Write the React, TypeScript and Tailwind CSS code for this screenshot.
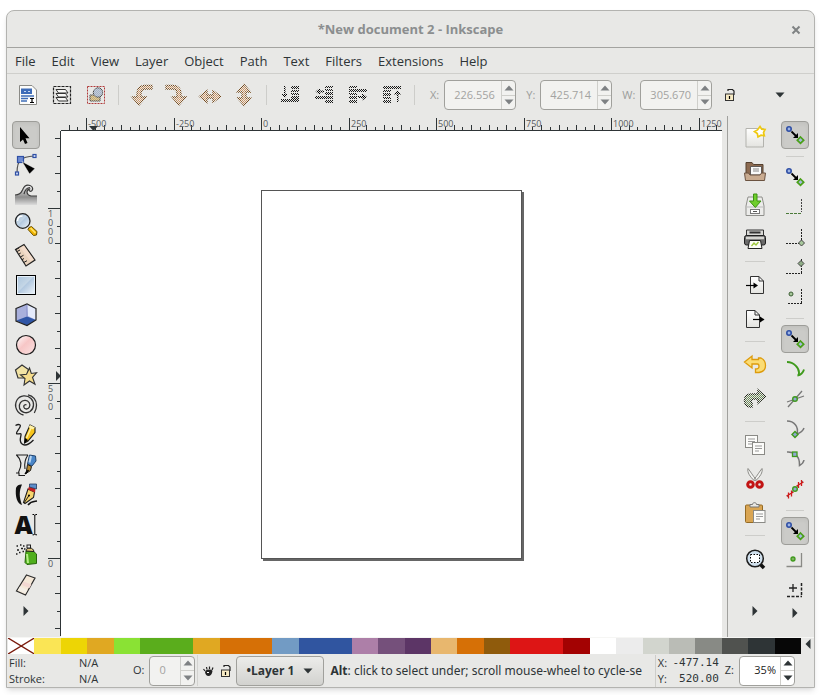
import { useState } from "react";
import type { ReactNode } from "react";
import clsx from "clsx";

interface Tool {
  id: string;
  label: string;
  icon: ReactNode;
}

type ToolEntry = Tool | null;

const INK = "#1c1c1c";

function Icon({ children, dim }: { children: ReactNode; dim?: boolean }) {
  return (
    <svg width="24" height="24" viewBox="0 0 24 24" fill="none" className="overflow-visible" aria-hidden="true">
      {children}
      {dim && <rect width="24" height="24" fill="url(#stipple)" />}
    </svg>
  );
}

// Shared gradients and the checker used over disabled icons
function Defs() {
  return (
    <svg width="0" height="0" className="absolute" aria-hidden="true">
      <defs>
        <pattern id="stipple" width="2" height="2" patternUnits="userSpaceOnUse">
          <rect width="1" height="1" fill="#e8e8e6" />
          <rect x="1" y="1" width="1" height="1" fill="#e8e8e6" />
        </pattern>
        <linearGradient id="blueFill" x1="0" y1="0" x2="1" y2="1">
          <stop offset="0" stopColor="#a9c3dc" />
          <stop offset="0.45" stopColor="#c4d6e6" />
          <stop offset="0.5" stopColor="#b3c9e0" />
          <stop offset="1" stopColor="#f2f7fb" />
        </linearGradient>
        <linearGradient id="pinkFill" x1="0" y1="0" x2="1" y2="1">
          <stop offset="0" stopColor="#fff" />
          <stop offset="0.45" stopColor="#f7c6c6" />
          <stop offset="1" stopColor="#fbe3e3" />
        </linearGradient>
        <linearGradient id="grayFill" x1="0" y1="0" x2="0" y2="1">
          <stop offset="0" stopColor="#f4f4f4" />
          <stop offset="0.6" stopColor="#8d8d8d" />
          <stop offset="1" stopColor="#dcdcdc" />
        </linearGradient>
        <linearGradient id="paper" x1="0" y1="0" x2="0" y2="1">
          <stop offset="0" stopColor="#fff" />
          <stop offset="1" stopColor="#e4e4e0" />
        </linearGradient>
      </defs>
    </svg>
  );
}

function SnapNodes() {
  return (
    <Icon>
      <circle cx="6" cy="6" r="2.200" fill="#9db4e4" stroke="#2f4fa5" strokeWidth="1.600" />
      <path d="M8.500 8.500l5 5" stroke="#000" strokeWidth="1.800" />
      <path d="M15 10v5h-5z" fill="#000" />
      <path d="M17.500 14l3.200 3.200-3.200 3.200-3.200-3.200z" fill="#a6b8e0" stroke="#4aa018" strokeWidth="1.700" />
    </Icon>
  );
}

const tools: Tool[] = [
  {
    id: "select",
    label: "Select",
    icon: (
      <Icon>
        <path d="M6 4v15l3-2.500 2 4.500 2.500-1-2-4.700H15.500z" fill="#000" />
      </Icon>
    ),
  },
  {
    id: "node",
    label: "Edit nodes",
    icon: (
      <Icon>
        <path d="M3 20C3 13 4.500 8.500 7 6.500 10 4 14 3.500 20 3" stroke="#555" strokeWidth="1.200" />
        <rect x="1.500" y="19" width="3" height="3" fill="#cfdcf5" stroke="#2f4fa5" strokeWidth="1.200" />
        <rect x="19" y="1.500" width="3" height="3" fill="#cfdcf5" stroke="#2f4fa5" strokeWidth="1.200" />
        <rect x="3.500" y="3.500" width="6" height="6" fill="#6d8ad0" stroke="#2f4fa5" strokeWidth="1.200" />
        <path d="M8 8.500l13 7-5.500 5.500z" fill="#000" stroke="#fff" strokeWidth=".5" />
      </Icon>
    ),
  },
  {
    id: "tweak",
    label: "Tweak",
    icon: (
      <Icon>
        <path
          d="M1 12c4 0 6-1.500 7.500-5C10 3.200 13 1.500 16 2.500c3 1 3.500 4 1.500 5.500-1.500.8-3-.5-2.200-1.800C12 7 12 12 17 13h6v9H1z"
          fill="url(#grayFill)"
        />
        <path
          d="M1 12c4 0 6-1.500 7.500-5C10 3.200 13 1.500 16 2.500c3 1 3.500 4 1.500 5.500-1.500.8-3-.5-2.200-1.800C12 7 12 12 17 13h6M10 11c1-4 2.500-6.500 6-6.500"
          stroke="#3c3c3c"
          strokeWidth="1.200"
        />
      </Icon>
    ),
  },
  {
    id: "zoom",
    label: "Zoom",
    icon: (
      <Icon>
        <path d="M15 14.500l2.500-1 5.500 5-.5 3.500-3 .5-5.500-6z" fill="#f0b400" stroke="#6b5000" strokeWidth="1" />
        <path d="M16.500 15l5 5" stroke="#ffe36b" strokeWidth="1.500" />
        <circle cx="8.700" cy="8" r="7.300" fill="url(#blueFill)" stroke="#222" strokeWidth="1.300" />
        <path d="M3.500 8c0-3 2-5 5-5" stroke="#fff" strokeWidth="1.500" />
      </Icon>
    ),
  },
  {
    id: "measure",
    label: "Measure",
    icon: (
      <Icon>
        <path d="M1.500 6.500L10 1.500l11 15.500-9 6z" fill="#ead3bd" stroke="#222" strokeWidth="1.200" />
        <path d="M10 3l9.500 13.500-3 1.500L6.500 5z" fill="#f3dccb" />
        <path d="M3 8.500l3-1.500M4.700 11.200l2-1.200M6.300 14l3.200-1.700M8 16.700l2-1.200M9.700 19.500l3.300-1.800M2 6.500l3-1.500" stroke="#222" strokeWidth="1" />
      </Icon>
    ),
  },
  {
    id: "rect",
    label: "Rectangle",
    icon: (
      <Icon>
        <rect x="2.500" y="2.500" width="19" height="19" fill="url(#blueFill)" stroke="#000" />
        <rect x="3.500" y="3.500" width="17" height="17" stroke="#e6f0f8" />
      </Icon>
    ),
  },
  {
    id: "box",
    label: "3D box",
    icon: (
      <Icon>
        <path d="M2 5.500L13 1l9 4.500V17l-9 5.500L2 18z" fill="#a9b0dc" />
        <path d="M13 1l9 4.500V17l-8-4z" fill="#e4eafb" />
        <path d="M2.500 17.500l10.500-4 9 3.500-9 5.500z" fill="#2f55a6" />
        <path d="M2 5.500L13 1l9 4.500V17l-9 5.500L2 18z" stroke="#222" strokeWidth="1.200" />
        <path d="M13 1.500v12" stroke="#7d86c4" strokeWidth=".8" />
      </Icon>
    ),
  },
  {
    id: "circle",
    label: "Ellipse",
    icon: (
      <Icon>
        <circle cx="12" cy="12" r="9.500" fill="url(#pinkFill)" stroke="#1c1c1c" strokeWidth="1.200" />
      </Icon>
    ),
  },
  {
    id: "star",
    label: "Star",
    icon: (
      <Icon>
        <path d="M8 2l6.500 4.500L13 15H4L1.500 7z" fill="#f2e3a4" stroke="#333" strokeWidth="1.200" />
        <path d="M15.500 5l1.800 5.500 5.200-.7-4 4.500 2.500 7-5.500-3.300-5.500 4 1-6.500-4.500-3.500 6-.7z" fill="#f5dc8c" stroke="#333" strokeWidth="1.100" />
      </Icon>
    ),
  },
  {
    id: "spiral",
    label: "Spiral",
    icon: (
      <Icon>
        <path
          d="M12.500 12c-1.300-.8-3 .3-2.700 2 .4 2.500 4.200 2.700 5.500.3 1.700-3-.5-6.800-4-7C7 7 4.500 11 5.500 15c1.200 4.500 6.800 6 10.500 3.500 4.500-3.200 4.500-9.500 1-13C13 1.500 6 2 3 7-.5 13 3 20.500 9.500 22M14 1.800c5 1 8.500 5.200 8.500 10.200 0 3.500-.8 5.800-2.200 8"
          stroke="#333"
          strokeWidth="1.300"
        />
      </Icon>
    ),
  },
  {
    id: "pencil",
    label: "Pencil",
    icon: (
      <Icon>
        <path d="M1.500 2.500C4 1 7.500 1 6 4 5 6.500 2 9 2.500 10.500c.6 1.500 4-.8 4.500.5.600 2-2.500 6 .5 9.500 3 3 7.500 1 12-3.500" stroke={INK} strokeWidth="1.300" />
        <path d="M16 2l5 2.500v5L14 18l-3.500 2 .5-6.500z" fill="#f7c41c" stroke={INK} strokeWidth="1.100" />
        <path d="M16 2l5 2.500-2 2-4.500-2.300z" fill="#fff1a6" />
        <path d="M17 5l-4.500 10" stroke="#fff0a0" strokeWidth="1.500" />
        <path d="M11 15l3 2-3.500 3.500z" fill="#000" />
      </Icon>
    ),
  },
  {
    id: "bezier",
    label: "Bezier",
    icon: (
      <Icon>
        <path d="M2 2h12M2.500 2C8 7 8 13 4.500 19.500M2 20h3v2.500h6M14 2c-3 4-4 8-3 14" stroke={INK} strokeWidth="1.100" />
        <path d="M15.500 2l6 1 .5 5-4 5-4.500-2z" fill="#4a86c8" stroke="#23456e" />
        <path d="M17 3l-1.500 6.500" stroke="#b9d5f0" strokeWidth="2" />
        <path d="M13.500 11.500l4 2-1 4-4.500 3z" fill="#b98b31" stroke={INK} />
        <path d="M11 21l3.500-4" stroke="#000" strokeWidth="1.500" />
      </Icon>
    ),
  },
  {
    id: "calligraphy",
    label: "Calligraphy",
    icon: (
      <Icon>
        <path d="M2 5c1-3 4-4 6-3.500C5 8 5 14 8 22c-5-1-7-9-6-17z" fill="#111" />
        <path d="M14 22c3-4 5-3.500 9-4" stroke="#111" strokeWidth="1.600" />
        <path d="M14 6l6.500 3-1 5.500-8.500 6-1.500-1z" fill="#f7d56e" stroke={INK} strokeWidth="1.100" />
        <path d="M10 20l5-7.500" stroke={INK} />
        <path d="M15 3.500l6.500 2-.5 4-7-3z" fill="#c42121" />
        <path d="M15.500 1h7v5l-7-2z" fill="#5d8ecb" stroke="#243b60" strokeWidth=".8" />
        <circle cx="15" cy="12.500" r="1" fill="#000" />
      </Icon>
    ),
  },
  {
    id: "text",
    label: "Text",
    icon: (
      <Icon>
        <text x="0.500" y="21" fontSize="25" fontWeight="800" fontFamily="'Open Sans', 'Noto Sans', sans-serif" fill="#111">
          A
        </text>
        <path d="M18.500 1.500h1.500l.8.800.8-.8H23M20.800 2v19M18.500 21.800h1.500l.8-.8.8.8H23" stroke="#000" strokeWidth="1" />
      </Icon>
    ),
  },
  {
    id: "spray",
    label: "Spray",
    icon: (
      <Icon>
        <path d="M2.500 3h1.500M6 2h1.500M3 7h2M7 5.500h2M9 3h1.500M5 9.500h1.500M8.500 8.500H10M2 11h1.500M10 6h1.500" stroke={INK} strokeWidth="1.700" />
        <path d="M12 8h7l3.500 3v9.500l-9.500 1-2-2z" fill="#4fae1c" stroke="#27650a" strokeWidth="1" />
        <path d="M13 11l1 9" stroke="#b6ee88" strokeWidth="2" />
        <path d="M12 8c0-2 2-3 4-3s3.500 1.500 4 3.500z" fill="#e3c678" stroke={INK} />
        <rect x="13" y="2" width="3.500" height="3" fill="#eee" stroke={INK} />
      </Icon>
    ),
  },
  {
    id: "eraser",
    label: "Eraser",
    icon: (
      <Icon>
        <path d="M12.500 2l8.500 3-9.500 17L2.500 18z" fill="#f5e8d8" stroke="#2c2c2c" strokeWidth="1.200" />
        <path d="M9.500 8.500l8 3-2 3.500-8-3z" fill="#f3d8d2" />
        <path d="M4 17l7.500 3.500 2-3.500L6 13.500z" fill="#f4efe6" />
      </Icon>
    ),
  },
];

const commands: ToolEntry[] = [
  {
    id: "new",
    label: "New",
    icon: (
      <Icon>
        <path d="M3 3.500h17.500v18.500H3z" fill="url(#paper)" stroke="#b3b3ae" />
        <path d="M17 1.500l1.700 2.700 3.300.3-1.500 3 .8 3.200-3.300-.5L15 12l-.7-3.500L11.500 6.500l3-1.600z" fill="#fff" stroke="#efc911" strokeWidth="1.700" />
      </Icon>
    ),
  },
  {
    id: "open",
    label: "Open",
    icon: (
      <Icon>
        <path d="M3 3.500h6l1.500 2H20V16H3z" fill="#8c6a50" stroke="#54402f" />
        <path d="M7.500 7.500h11V16h-11z" fill="#fafafa" stroke="#444" strokeWidth=".8" />
        <path d="M10 10h6M10 12h6" stroke="#888" />
        <path d="M1.500 14h4l1.500 2h10l1.500-2h4l-1 7.500H2.500z" fill="#c9ab90" stroke="#6b5240" />
      </Icon>
    ),
  },
  {
    id: "save",
    label: "Save",
    icon: (
      <Icon>
        <path d="M5 4h14l2 9v9.500H3V13z" fill="#ececea" stroke="#8f8f8b" />
        <path d="M3.500 14h17" stroke="#bbb" />
        <rect x="7.500" y="16.500" width="9" height="4" fill="#fff" stroke="#777" />
        <path d="M10 18.500h4" stroke="#555" />
        <path d="M10.500 1h3.500v7h4l-5.700 6.500L6.500 8h4z" fill="#6fce2c" stroke="#3d9112" />
      </Icon>
    ),
  },
  {
    id: "print",
    label: "Print",
    icon: (
      <Icon>
        <path d="M3.500 3h17v6h-17z" fill="#d9d9d6" stroke="#333" />
        <path d="M6.500 5.500h11" stroke="#333" strokeWidth="2" />
        <rect x="1.500" y="8.500" width="21" height="9.500" rx="2" fill="#6a6a6a" stroke="#1f1f1f" />
        <path d="M3 11h18" stroke="#d5d5d1" strokeWidth="2.500" />
        <path d="M6.500 13.500h11l1.500 8H5z" fill="#fbfbf6" stroke="#222" />
        <path d="M8.500 19l2.500-3 2 2 2.500-3" stroke="#9cc63c" strokeWidth="1.300" />
      </Icon>
    ),
  },
  null,
  {
    id: "import",
    label: "Import",
    icon: (
      <Icon>
        <path d="M7.500 3.500h8.500l4.500 4.500v12.500h-13z" fill="url(#paper)" stroke="#333" />
        <path d="M16 3.500V8h4.500" stroke="#333" />
        <path d="M3 12.500h8" stroke="#000" strokeWidth="1.200" />
        <path d="M10.500 9.500l4.500 3-4.500 3z" fill="#000" />
      </Icon>
    ),
  },
  {
    id: "export",
    label: "Export",
    icon: (
      <Icon>
        <path d="M3.500 3.500H12l4.500 4.500v12.500h-13z" fill="url(#paper)" stroke="#333" />
        <path d="M12 3.500V8h4.500" stroke="#333" />
        <path d="M10 12.500h7.500" stroke="#000" strokeWidth="1.200" />
        <path d="M17 9.500l4.500 3-4.500 3z" fill="#000" />
      </Icon>
    ),
  },
  null,
  {
    id: "undo",
    label: "Undo",
    icon: (
      <Icon>
        <path d="M1.500 9L9 3v3.500h6.500V5H18c3 1.500 4.500 4 4.500 7.500 0 4-2.500 6.500-6.500 7h-3.500V16c2.500 0 3.500-1 3.500-2.500S15.500 11 14.500 11H9v4z" fill="#fbdc74" stroke="#dd9b0c" strokeWidth="1.300" />
      </Icon>
    ),
  },
  {
    id: "redo",
    label: "Redo",
    icon: (
      <Icon dim>
        <path d="M22.500 9.500L15 3v4H8.500C4 7 1.500 9.500 1.500 13.500c0 3.500 2 6 5.500 6.500h2v-3.500c-2.500-3 0-4.500 2-4.500h4v4z" fill="#6d8a5a" stroke="#1f2518" strokeWidth="1.500" />
      </Icon>
    ),
  },
  null,
  {
    id: "copy",
    label: "Copy",
    icon: (
      <Icon>
        <rect x="2.500" y="2.500" width="12" height="12" fill="#fcfcfa" stroke="#8a8a86" />
        <path d="M5 6h7M5 8.500h7M5 11h4" stroke="#999" />
        <rect x="9.500" y="9.500" width="12" height="12" fill="#fcfcfa" stroke="#8a8a86" />
        <path d="M12 13h7M12 15.500h7M12 18h4" stroke="#999" />
      </Icon>
    ),
  },
  {
    id: "cut",
    label: "Cut",
    icon: (
      <Icon>
        <path d="M5 1.500c-1 4 2 8 6.500 12.500l1.500-1.500C10 9 7.500 4.500 5 1.500zM19 1.500c1 4-2 8-6.500 12.500L11 12.500c3-3.500 5.500-8 8-11z" fill="#f3f3f1" stroke="#8c8c88" />
        <circle cx="7.500" cy="17.500" r="2.800" stroke="#c21414" strokeWidth="3" />
        <circle cx="16.500" cy="17.500" r="2.800" stroke="#c21414" strokeWidth="3" />
      </Icon>
    ),
  },
  {
    id: "paste",
    label: "Paste",
    icon: (
      <Icon>
        <rect x="2.500" y="4" width="17" height="17.500" rx="1" fill="#d9a553" stroke="#946a24" />
        <path d="M7 6V3.500h2.500c0-2.500 4-2.500 4 0H16V6z" fill="#e8e8e5" stroke="#777" />
        <rect x="10.500" y="9.500" width="11.500" height="12" fill="#fcfcfa" stroke="#8a8a86" />
        <path d="M13 13h7M13 15.500h7M13 18h4" stroke="#999" />
      </Icon>
    ),
  },
  null,
  {
    id: "fit",
    label: "Zoom to selection",
    icon: (
      <Icon>
        <path d="M17 17l4 4" stroke="#111" strokeWidth="3.500" />
        <circle cx="12" cy="11.500" r="8.300" fill="#cfdfec" stroke="#1c1c1c" strokeWidth="1.500" />
        <rect x="7.500" y="7.500" width="9" height="8" fill="#fff" stroke="#000" strokeDasharray="1.500 1.500" />
      </Icon>
    ),
  },
];

const snaps: ToolEntry[] = [
  { id: "snap", label: "Enable snapping", icon: <SnapNodes /> },
  null,
  { id: "snap-bbox", label: "Snap bounding boxes", icon: <SnapNodes /> },
  {
    id: "snap-edge",
    label: "Snap to edges",
    icon: (
      <Icon>
        <path d="M18.500 4v13" stroke="#444" strokeDasharray="2 1" />
        <path d="M3 18.500h16" stroke="#4a7a38" strokeDasharray="3 1" />
      </Icon>
    ),
  },
  {
    id: "snap-corner",
    label: "Snap to corners",
    icon: (
      <Icon>
        <path d="M18.500 4v13M3 18.500h14" stroke="#222" strokeDasharray="2 1" />
        <path d="M18.500 15l3 3-3 3-3-3z" fill="#a6c79a" stroke="#444" />
      </Icon>
    ),
  },
  {
    id: "snap-edge-mid",
    label: "Snap edge midpoints",
    icon: (
      <Icon>
        <path d="M18.500 4v14M3 18.500h16" stroke="#222" strokeDasharray="2 1" />
        <path d="M18 5.500l3 3-3 3-3-3z" fill="#8fae86" stroke="#444" />
      </Icon>
    ),
  },
  {
    id: "snap-center",
    label: "Snap box centers",
    icon: (
      <Icon>
        <path d="M18.500 4v14M5 18.500h14" stroke="#222" strokeDasharray="2 1" />
        <circle cx="8" cy="9" r="2" fill="#a6c79a" stroke="#3a5c33" />
      </Icon>
    ),
  },
  null,
  { id: "snap-nodes", label: "Snap nodes", icon: <SnapNodes /> },
  {
    id: "snap-path",
    label: "Snap to paths",
    icon: (
      <Icon>
        <path d="M4 5c7 0 12 6 12 10.500 0 1.500-.5 3-1.500 3 3-.5 5.500-2.500 6.500-6" stroke="#3f9a1c" strokeWidth="1.900" />
      </Icon>
    ),
  },
  {
    id: "snap-intersect",
    label: "Snap to intersections",
    icon: (
      <Icon>
        <path d="M5 20L19 4M4 15l17-6" stroke="#777" strokeWidth="1.300" />
        <circle cx="12" cy="12" r="2.300" fill="#8ea6d4" stroke="#3f9a1c" strokeWidth="1.400" />
      </Icon>
    ),
  },
  {
    id: "snap-cusp",
    label: "Snap cusp nodes",
    icon: (
      <Icon>
        <path d="M4 4c7 0 12 5.500 10 13 3-1 6-3 7-6" stroke="#777" strokeWidth="1.500" />
        <path d="M12 14.500l3 3-3 3-3-3z" fill="#8ea6d4" stroke="#3f9a1c" strokeWidth="1.400" />
      </Icon>
    ),
  },
  {
    id: "snap-smooth",
    label: "Snap smooth nodes",
    icon: (
      <Icon>
        <path d="M4 5c7-.5 13 4 12.500 13.500 2-1 4-2.500 4.500-5.500" stroke="#777" strokeWidth="1.500" />
        <rect x="9.500" y="5" width="4.500" height="4.500" fill="#8ea6d4" stroke="#3f9a1c" strokeWidth="1.300" />
      </Icon>
    ),
  },
  {
    id: "snap-line-mid",
    label: "Snap line midpoints",
    icon: (
      <Icon>
        <path d="M4 20L20 4" stroke="#777" />
        <path d="M5.500 15.500v6M8.500 13.500v6M3.500 19l7-4M15.500 5v6M18.500 3v6M13.500 9l7-4" stroke="#d11b1b" strokeWidth="1.300" />
        <circle cx="12" cy="12" r="2.300" fill="#8ea6d4" stroke="#3f9a1c" strokeWidth="1.400" />
      </Icon>
    ),
  },
  null,
  { id: "snap-others", label: "Snap other points", icon: <SnapNodes /> },
  {
    id: "snap-object-mid",
    label: "Snap object centers",
    icon: (
      <Icon>
        <path d="M18.500 4v13.500H3.500" stroke="#8a8a86" strokeWidth="1.300" />
        <circle cx="10" cy="10" r="2" fill="#7db35e" stroke="#3f9a1c" strokeWidth="1.300" />
      </Icon>
    ),
  },
  {
    id: "snap-rotation",
    label: "Snap rotation centers",
    icon: (
      <Icon>
        <path d="M10 5v8M6 9h8" stroke="#222" strokeWidth="1.300" />
        <path d="M18.500 4v12M4 17.500h15" stroke="#222" strokeWidth="1.500" strokeDasharray="3 1.500" />
      </Icon>
    ),
  },
];

const arrowFill = "#cf9768";
const arrowLine = "#74491c";

const barIcons: ToolEntry[] = [
  {
    id: "select-all",
    label: "Select all",
    icon: (
      <Icon>
        <path d="M3.500 2.500H16l4.500 4.500v14.500h-17z" fill="#fcfcfa" stroke="#8a8a86" />
        <path d="M5 5.500h11v5.500H5z" fill="#3e6cb8" />
        <path d="M8 8.500h2M12 8.500h2" stroke="#c9d8f0" />
        <path d="M5 13h13M5 15.500h13M5 18h6" stroke="#3e6cb8" strokeWidth="1.500" />
        <rect x="12" y="14.500" width="8" height="6.500" fill="#fff" />
        <path d="M14 15.500h4M16 15.500v4M14 19.500h4" stroke="#000" strokeWidth="1.200" />
      </Icon>
    ),
  },
  {
    id: "select-layers",
    label: "Select all in all layers",
    icon: (
      <Icon>
        <rect x="3.500" y="3.500" width="17" height="17" stroke="#222" strokeWidth="1.200" strokeDasharray="3 1" />
        <path d="M6 14.500l2.500 3.500H18l-2.500-3.500zM6 10.500L8.500 14H18l-2.500-3.500zM6 6.500L8.500 10H18l-2.500-3.500z" fill="#f8f8f6" stroke="#333" />
      </Icon>
    ),
  },
  {
    id: "deselect",
    label: "Deselect",
    icon: (
      <Icon>
        <rect x="3.500" y="3.500" width="17" height="17" stroke="#b03a3a" strokeWidth="1" strokeDasharray="2 1" />
        <path d="M6 12h10v6H6z" fill="#c9ab68" stroke="#444" />
        <circle cx="14" cy="9.500" r="4.700" fill="#a3b2c8" stroke="#444" />
        <rect x="4" y="4" width="16" height="16" fill="url(#stipple)" opacity=".5" />
      </Icon>
    ),
  },
  null,
  {
    id: "rotate-left",
    label: "Rotate left",
    icon: (
      <Icon dim>
        <path d="M22 2.500h-7.500C9.500 2.500 7 6 7 10.500v3.500H2L9 22l7-8h-5v-3.500c0-3 1.500-4.500 4-4.500h7z" fill={arrowFill} stroke={arrowLine} strokeWidth="1.300" />
      </Icon>
    ),
  },
  {
    id: "rotate-right",
    label: "Rotate right",
    icon: (
      <Icon dim>
        <path d="M2 2.500h7.500C14.500 2.500 17 6 17 10.500v3.500h5L15 22l-7-8h5v-3.500C13 7.500 11.500 6 9 6H2z" fill={arrowFill} stroke={arrowLine} strokeWidth="1.300" />
      </Icon>
    ),
  },
  {
    id: "flip-h",
    label: "Flip horizontal",
    icon: (
      <Icon dim>
        <path d="M1.500 13.500l7.500-6V12h6V7.500l7.500 6-7.500 6V15H9v4.500z" fill={arrowFill} stroke={arrowLine} strokeWidth="1.300" />
      </Icon>
    ),
  },
  {
    id: "flip-v",
    label: "Flip vertical",
    icon: (
      <Icon dim>
        <path d="M12 1.500l6.500 7.500H14v6h4.500l-6.500 7.500-6.500-7.500H10V9H5.500z" fill={arrowFill} stroke={arrowLine} strokeWidth="1.300" />
      </Icon>
    ),
  },
  null,
  {
    id: "lower-bottom",
    label: "Lower to bottom",
    icon: (
      <Icon dim>
        <path d="M13 3h8v3h-8zM13 7h8v2h-8zM13 10h8v2h-8zM13 13h8v3h-8zM3 16h18v3H3z" fill="#1a1a1a" />
        <path d="M6 3h1.500v8H10l-3.300 4-3.200-4H6z" fill="#000" />
      </Icon>
    ),
  },
  {
    id: "lower",
    label: "Lower",
    icon: (
      <Icon dim>
        <path d="M13 3h8v2h-8zM13 6h8v2h-8zM13 9h8v3h-8zM3 13h18v3H3zM13 17h8v3h-8z" fill="#1a1a1a" />
        <path d="M3.500 8.500L8 5v2.500h4v2H8V12z" fill="#000" />
      </Icon>
    ),
  },
  {
    id: "raise",
    label: "Raise",
    icon: (
      <Icon dim>
        <path d="M3 3h8v2H3zM3 6h18v3H3zM3 10h8v2H3zM3 13h8v3H3zM3 17h8v3H3z" fill="#1a1a1a" />
        <path d="M12 13h4v-3l5 4-4.500 3.500V15H12z" fill="#000" />
      </Icon>
    ),
  },
  {
    id: "raise-top",
    label: "Raise to top",
    icon: (
      <Icon dim>
        <path d="M3 3h18v3H3zM3 7h8v2H3zM3 10h8v3H3zM3 14h8v2H3zM3 17h8v3H3z" fill="#1a1a1a" />
        <path d="M17.500 7l3.500 4.500h-2.500V19H17v-7.500h-3z" fill="#000" />
      </Icon>
    ),
  },
  null,
];

const menus = ["File", "Edit", "View", "Layer", "Object", "Path", "Text", "Filters", "Extensions", "Help"];

const palette = [
  "#fae555", "#edd505", "#e0a822", "#8ae234", "#5aad1c", "#5aad1c", "#e0a822", "#d67006", "#d67006",
  "#729bc4", "#3055a0", "#3055a0", "#ad7fa8", "#75507b", "#5c3566", "#e8b76e", "#d67006", "#8f5b0c",
  "#dd1515", "#dd1515", "#a30202", "#ffffff", "#ececec", "#d2d5ce", "#babcb6", "#888a85", "#50524f",
  "#2e3436", "#070707",
];

function Triangle({ dir }: { dir: "up" | "down" | "left" | "right" }) {
  return (
    <svg width="12" height="12" viewBox="0 0 12 12" fill="currentColor" aria-hidden="true">
      {dir === "up" && <path d="M6 3.500l4.500 5h-9z" />}
      {dir === "down" && <path d="M6 8.500l4.500-5h-9z" />}
      {dir === "left" && <path d="M3.500 6l5-5v10z" />}
      {dir === "right" && <path d="M8.500 6l-5-5v10z" />}
    </svg>
  );
}

interface SpinProps {
  id: string;
  label: string;
  value: string;
  inputClass: string;
  disabled?: boolean;
}

function SpinBox({ id, label, value, inputClass, disabled }: SpinProps) {
  const [text, setText] = useState(value);
  return (
    <div className="flex items-center gap-[5px]">
      <label htmlFor={id} className={clsx("text-[11px]", disabled && id !== "opacity" && "text-[#9b9c9a]")}>
        {label}
      </label>
      <div
        className={clsx(
          "flex h-[30px] overflow-hidden rounded-[4px] border border-[#a0a09c]",
          disabled ? "bg-[#f2f2f0]" : "bg-white"
        )}
      >
        <input
          id={id}
          value={text}
          disabled={disabled}
          onChange={(e) => setText(e.target.value)}
          className={clsx(
            "min-w-0 bg-transparent text-[11px] outline-none",
            disabled ? "text-[#a3a3a1]" : "text-[#222]",
            inputClass
          )}
        />
        <div
          className={clsx(
            "flex w-[14px] flex-col border-l border-[#cfcfcb]",
            disabled ? "text-[#7e8183]" : "text-[#2e3436]"
          )}
        >
          <button
            aria-label={`Increase ${label}`}
            disabled={disabled}
            className="flex flex-1 items-center justify-center border-b border-[#cfcfcb]"
          >
            <Triangle dir="up" />
          </button>
          <button aria-label={`Decrease ${label}`} disabled={disabled} className="flex flex-1 items-center justify-center">
            <Triangle dir="down" />
          </button>
        </div>
      </div>
    </div>
  );
}

function ToolButton({ tool, active, className }: { tool: Tool; active?: boolean; className: string }) {
  return (
    <button
      aria-label={tool.label}
      className={clsx(
        "flex items-center justify-center",
        className,
        active && "rounded-[4px] border border-[#9d9d99] bg-[#cbcbc8] shadow-inner"
      )}
    >
      {tool.icon}
    </button>
  );
}

function LockIcon() {
  return (
    <svg width="12" height="14" viewBox="0 0 12 14" fill="none" aria-hidden="true">
      <path d="M4 3V1.500h4.500L10 3v4" stroke="#222" strokeWidth="1.200" />
      <rect x="1.500" y="6" width="8" height="6.500" fill="#f8ebc4" stroke="#333" />
      <path d="M5.500 8v3" stroke="#000" strokeWidth="1.200" />
    </svg>
  );
}

function EyeIcon() {
  return (
    <svg width="12" height="14" viewBox="0 0 12 14" fill="none" aria-hidden="true">
      <path d="M3 8c1-3 6-3 7.500-1-.5 3.500-2 5-4 5S3.500 10.500 3 8z" fill="#222" />
      <path d="M3 7L1.500 5M5 5.500L4.500 3M7.500 5V2.500M10 6l1-2.500" stroke="#222" strokeWidth="1.200" />
      <path d="M5 8.500h2" stroke="#fff" />
    </svg>
  );
}

function HorizontalRuler() {
  const ticks = Array.from({ length: 76 }, (_, i) => i - 2);
  return (
    <svg width="100%" height="15" className="block" aria-hidden="true">
      {ticks.map((i) => {
        const x = Math.round(25 + i * 8.75) + 0.5;
        const top = i % 10 === 0 ? 2 : i % 2 === 0 ? 9 : 11;
        return <path key={i} d={`M${x} ${top}V15`} stroke="#2e3436" />;
      })}
      {ticks
        .filter((i) => i % 10 === 0)
        .map((i) => (
          <text key={i} x={Math.round(25 + i * 8.75) + 2} y="11" fontSize="9" fill="#55595b">
            {-500 + i * 25}
          </text>
        ))}
      <path d="M28 10h9l-4.500 5z" fill="#2e3436" />
      <path d="M0 14.500h3000" stroke="#2e3436" />
    </svg>
  );
}

function VerticalRuler() {
  const ticks = Array.from({ length: 29 }, (_, i) => i - 4);
  return (
    <svg width="16" height="505" className="block" aria-hidden="true">
      {ticks.map((i) => {
        const y = Math.round(77 + i * 17.5) + 0.5;
        const left = i % 10 === 0 ? 3 : i % 2 === 0 ? 10 : 12;
        return <path key={i} d={`M${left} ${y}H16`} stroke="#2e3436" />;
      })}
      {["1000", "500", "0"].map((label, n) =>
        label.split("").map((digit, k) => (
          <text key={`${label}-${k}`} x="3" y={86 + n * 175 + k * 9} fontSize="9" fill="#55595b">
            {digit}
          </text>
        ))
      )}
      <path d="M11 240v10l5-5z" fill="#2e3436" />
      <path d="M15.500 0v506" stroke="#2e3436" />
    </svg>
  );
}

export default function App() {
  return (
    <div className="bg-white pt-[10px] pr-[10px] pb-[7px] pl-[6px] font-['Open_Sans','Noto_Sans',sans-serif] text-[13px] text-[#2e3436]">
      <Defs />
      <div className="overflow-hidden rounded-t-[8px] border border-[#b3b3b0] bg-[#e8e8e6] shadow-md">
        {/* Title bar */}
        <header className="flex h-[37px] items-center border-b border-[#a3a3a0] px-[10px] pt-[2px]">
          <span className="w-4" />
          <h1 className="flex-1 text-center font-bold text-[#8b8e8f]">*New document 2 - Inkscape</h1>
          <button aria-label="Close" className="flex w-4 justify-center text-[#7f8283]">
            <svg width="10" height="10" viewBox="0 0 10 10" aria-hidden="true">
              <path d="M1.500 1.500l7 7M8.500 1.500l-7 7" stroke="currentColor" strokeWidth="2" />
            </svg>
          </button>
        </header>

        {/* Menu */}
        <nav className="flex h-[26px] items-center gap-4 border-b border-[#cfcfcc] px-2 pt-[2px]">
          {menus.map((m) => (
            <button key={m}>{m}</button>
          ))}
        </nav>

        {/* Tool controls */}
        <div className="flex h-[42px] items-center pl-1">
          {barIcons.map((t, i) =>
            t ? (
              <ToolButton key={t.id} tool={t} className="h-[34px] w-[34px]" />
            ) : (
              <span key={i} className="mx-[5px] h-5 w-[2px] border-l border-[#cdcdca]" />
            )
          )}
          <div className="ml-[9px] flex items-center gap-[10px]">
            <SpinBox id="x" label="X:" value="226.556" inputClass="w-[56px] pl-[9px]" disabled />
            <SpinBox id="y" label="Y:" value="425.714" inputClass="w-[56px] pl-[9px]" disabled />
            <SpinBox id="w" label="W:" value="305.670" inputClass="w-[56px] pl-[9px]" disabled />
          </div>
          <button aria-label="Lock ratio" className="ml-3">
            <LockIcon />
          </button>
          <button aria-label="More controls" className="mr-7 ml-auto">
            <Triangle dir="down" />
          </button>
        </div>

        {/* Workspace */}
        <div className="flex">
          <div className="flex w-[38px] flex-col items-center gap-[2px] pt-[5px]">
            {tools.map((t) => (
              <ToolButton key={t.id} tool={t} active={t.id === "select"} className="h-7 w-7" />
            ))}
            <button aria-label="More tools" className="mt-1">
              <Triangle dir="right" />
            </button>
          </div>

          <div className="flex min-w-0 flex-1 flex-col">
            <div className="pl-4">
              <HorizontalRuler />
            </div>
            <div className="flex flex-1">
              <VerticalRuler />
              <main className="relative flex-1 overflow-hidden bg-white">
                <div className="absolute top-[59px] left-[200px] h-[369px] w-[261px] border border-[#555] bg-white shadow-[2px_2px_0_#666]" />
              </main>
            </div>
          </div>

          <div className="ml-[5px] flex w-[53px] flex-col items-center border-l border-[#a0a09d] pt-1 pl-[2px]">
            {commands.map((t, i) =>
              t ? (
                <ToolButton key={t.id} tool={t} className="h-[34px] w-[34px]" />
              ) : (
                <span key={i} className="my-[5px] h-[2px] w-5 border-t border-[#cdcdca]" />
              )
            )}
            <button aria-label="More commands" className="mt-[29px]">
              <Triangle dir="right" />
            </button>
          </div>

          <div className="mr-1 flex w-[30px] flex-col items-center pt-[5px] pb-[18px]">
            {snaps.map((t, i) =>
              t ? (
                <ToolButton
                  key={t.id}
                  tool={t}
                  active={["snap", "snap-nodes", "snap-others"].includes(t.id)}
                  className="mb-[2px] h-7 w-7"
                />
              ) : (
                <span key={i} className="my-[5px] h-[2px] w-[18px] border-t border-[#cdcdca]" />
              )
            )}
            <button aria-label="More snapping">
              <Triangle dir="right" />
            </button>
          </div>
        </div>

        {/* Palette */}
        <div className="flex h-[17px] border-t border-[#f6f6f4] pl-px">
          <button aria-label="No color" className="flex-1 bg-white">
            <svg width="100%" height="16" viewBox="0 0 26 16" preserveAspectRatio="none" aria-hidden="true">
              <path d="M0 0l26 16M26 0L0 16" stroke="#7a1a0c" strokeWidth="1.400" />
            </svg>
          </button>
          {palette.map((color, i) => (
            <button key={i} aria-label={color} className="flex-1" style={{ backgroundColor: color }} />
          ))}
          <button aria-label="Palette menu" className="flex w-[13px] justify-center">
            <Triangle dir="left" />
          </button>
        </div>

        {/* Status bar */}
        <footer className="flex h-[33px] items-center pr-[19px] pl-[2px]">
          <dl className="grid w-[124px] shrink-0 grid-cols-[70px_1fr] text-[11px] leading-4">
            <dt>Fill:</dt>
            <dd>N/A</dd>
            <dt>Stroke:</dt>
            <dd>N/A</dd>
          </dl>
          <SpinBox id="opacity" label="O:" value="0" inputClass="w-[30px] pl-[9px]" disabled />
          <div className="ml-[2px] flex h-[31px] items-center gap-[6px] border-l border-[#d3d3d0] pl-1">
            <button aria-label="Toggle layer visibility">
              <EyeIcon />
            </button>
            <button aria-label="Lock layer">
              <LockIcon />
            </button>
          </div>
          <button className="ml-1 flex h-[30px] w-[88px] shrink-0 items-center justify-between rounded-[4px] border border-[#a0a09c] bg-linear-to-b from-[#ececea] to-[#d2d2cf] px-[9px] text-[12px] font-bold">
            <span>•Layer 1</span>
            <Triangle dir="down" />
          </button>
          <p className="ml-[6px] min-w-0 flex-1 overflow-hidden pt-px font-['Noto_Sans',sans-serif] text-[12px] whitespace-nowrap">
            <b>Alt</b>: click to select under; scroll mouse-wheel to cycle-se
          </p>
          <dl className="grid w-[64px] shrink-0 grid-cols-[auto_1fr] border-l border-[#cdcdca] pl-[2px] text-[11px] leading-4">
            <dt>X:</dt>
            <dd className="text-right font-['DejaVu_Sans_Mono',monospace]">-477.14</dd>
            <dt>Y:</dt>
            <dd className="text-right font-['DejaVu_Sans_Mono',monospace]">520.00</dd>
          </dl>
          <div className="ml-[6px]">
            <SpinBox id="zoom" label="Z:" value="35%" inputClass="w-[40px] pr-1 text-right" />
          </div>
        </footer>
      </div>
    </div>
  );
}
